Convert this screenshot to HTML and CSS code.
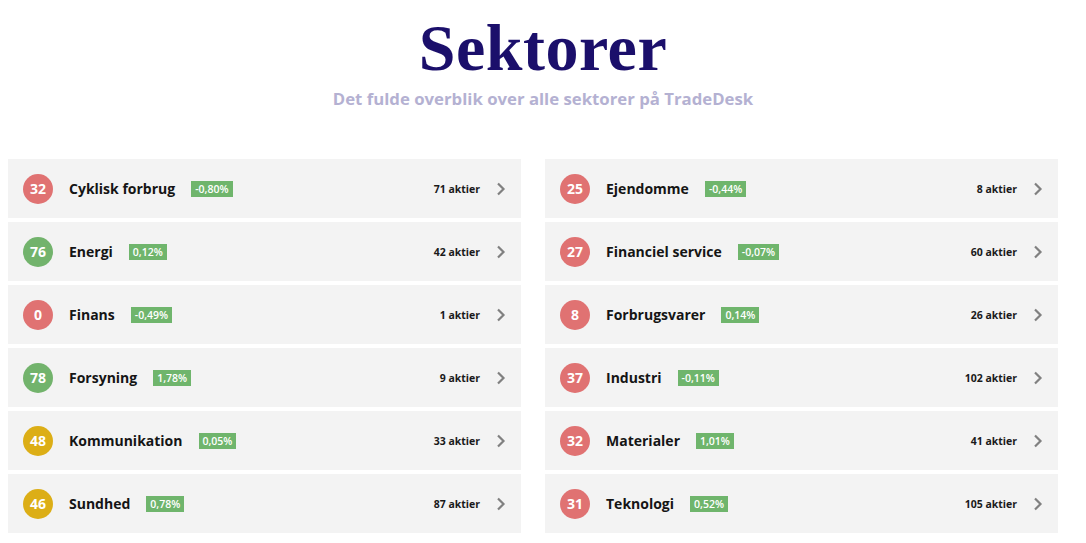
FILE: index.html
```html
<!DOCTYPE html>
<html lang="da">
<head>
<meta charset="utf-8">
<title>Sektorer</title>
<link rel="stylesheet" href="styles.css">
</head>
<body>
<header class="hero">
  <h1 class="title">Sektorer</h1>
  <p class="subtitle">Det fulde overblik over alle sektorer på TradeDesk</p>
</header>
<main class="grid">
  <div class="col">
    <a class="card"><span class="score red">32</span><span class="name">Cyklisk forbrug</span><span class="chg">-0,80%</span><span class="count">71 aktier</span><svg class="chev" viewBox="0 0 10 14"><path d="M2 1.5 L7.5 7 L2 12.5"/></svg></a>
    <a class="card"><span class="score green">76</span><span class="name">Energi</span><span class="chg">0,12%</span><span class="count">42 aktier</span><svg class="chev" viewBox="0 0 10 14"><path d="M2 1.5 L7.5 7 L2 12.5"/></svg></a>
    <a class="card"><span class="score red">0</span><span class="name">Finans</span><span class="chg">-0,49%</span><span class="count">1 aktier</span><svg class="chev" viewBox="0 0 10 14"><path d="M2 1.5 L7.5 7 L2 12.5"/></svg></a>
    <a class="card"><span class="score green">78</span><span class="name">Forsyning</span><span class="chg">1,78%</span><span class="count">9 aktier</span><svg class="chev" viewBox="0 0 10 14"><path d="M2 1.5 L7.5 7 L2 12.5"/></svg></a>
    <a class="card"><span class="score yellow">48</span><span class="name">Kommunikation</span><span class="chg">0,05%</span><span class="count">33 aktier</span><svg class="chev" viewBox="0 0 10 14"><path d="M2 1.5 L7.5 7 L2 12.5"/></svg></a>
    <a class="card"><span class="score yellow">46</span><span class="name">Sundhed</span><span class="chg">0,78%</span><span class="count">87 aktier</span><svg class="chev" viewBox="0 0 10 14"><path d="M2 1.5 L7.5 7 L2 12.5"/></svg></a>
  </div>
  <div class="col">
    <a class="card"><span class="score red">25</span><span class="name">Ejendomme</span><span class="chg">-0,44%</span><span class="count">8 aktier</span><svg class="chev" viewBox="0 0 10 14"><path d="M2 1.5 L7.5 7 L2 12.5"/></svg></a>
    <a class="card"><span class="score red">27</span><span class="name">Financiel service</span><span class="chg">-0,07%</span><span class="count">60 aktier</span><svg class="chev" viewBox="0 0 10 14"><path d="M2 1.5 L7.5 7 L2 12.5"/></svg></a>
    <a class="card"><span class="score red">8</span><span class="name">Forbrugsvarer</span><span class="chg">0,14%</span><span class="count">26 aktier</span><svg class="chev" viewBox="0 0 10 14"><path d="M2 1.5 L7.5 7 L2 12.5"/></svg></a>
    <a class="card"><span class="score red">37</span><span class="name">Industri</span><span class="chg">-0,11%</span><span class="count">102 aktier</span><svg class="chev" viewBox="0 0 10 14"><path d="M2 1.5 L7.5 7 L2 12.5"/></svg></a>
    <a class="card"><span class="score red">32</span><span class="name">Materialer</span><span class="chg">1,01%</span><span class="count">41 aktier</span><svg class="chev" viewBox="0 0 10 14"><path d="M2 1.5 L7.5 7 L2 12.5"/></svg></a>
    <a class="card"><span class="score red">31</span><span class="name">Teknologi</span><span class="chg">0,52%</span><span class="count">105 aktier</span><svg class="chev" viewBox="0 0 10 14"><path d="M2 1.5 L7.5 7 L2 12.5"/></svg></a>
  </div>
</main>
</body>
</html>
```
FILE: styles.css
```css
* { box-sizing: border-box; }
body {
  margin: 0;
  background: #ffffff;
  font-family: "Open Sans", "Noto Sans", sans-serif;
  color: #1a1a1a;
}
.hero {
  text-align: center;
  padding-top: 16px;
}
.title {
  margin: 0;
  font-family: "Liberation Serif", serif;
  font-weight: 700;
  font-size: 66px;
  line-height: 64px;
  letter-spacing: 0.5px;
  color: #1b0f6b;
}
.subtitle {
  margin: 8px 0 0;
  font-size: 16.75px;
  line-height: 22px;
  font-weight: 700;
  color: #b4b1d2;
}
.grid {
  display: grid;
  grid-template-columns: 513px 513px;
  column-gap: 24px;
  margin: 49px 0 0 8px;
}
.col {
  display: flex;
  flex-direction: column;
  gap: 4px;
}
.card {
  display: flex;
  align-items: center;
  height: 59px;
  padding: 0 15px;
  background: #f3f3f3;
  text-decoration: none;
  color: inherit;
}
.score {
  width: 30px;
  height: 30px;
  border-radius: 50%;
  display: flex;
  align-items: center;
  justify-content: center;
  color: #fff;
  font-size: 14px;
  font-weight: 700;
  flex: none;
}
.red { background: #e07272; }
.green { background: #72b36c; }
.yellow { background: #dcae16; }
.name {
  margin-left: 16px;
  font-size: 14px;
  font-weight: 700;
  color: #151515;
}
.chg {
  margin-left: 16px;
  background: #6fb56c;
  color: #fff;
  font-size: 10.5px;
  font-weight: 600;
  line-height: 16px;
  height: 16px;
  padding: 0 4px;
}
.count {
  margin-left: auto;
  font-size: 10.5px;
  font-weight: 700;
  color: #1a1a1a;
}
.chev {
  width: 10px;
  height: 14px;
  margin-left: 16px;
  flex: none;
  fill: none;
  stroke: #808080;
  stroke-width: 2.2;
}
```
